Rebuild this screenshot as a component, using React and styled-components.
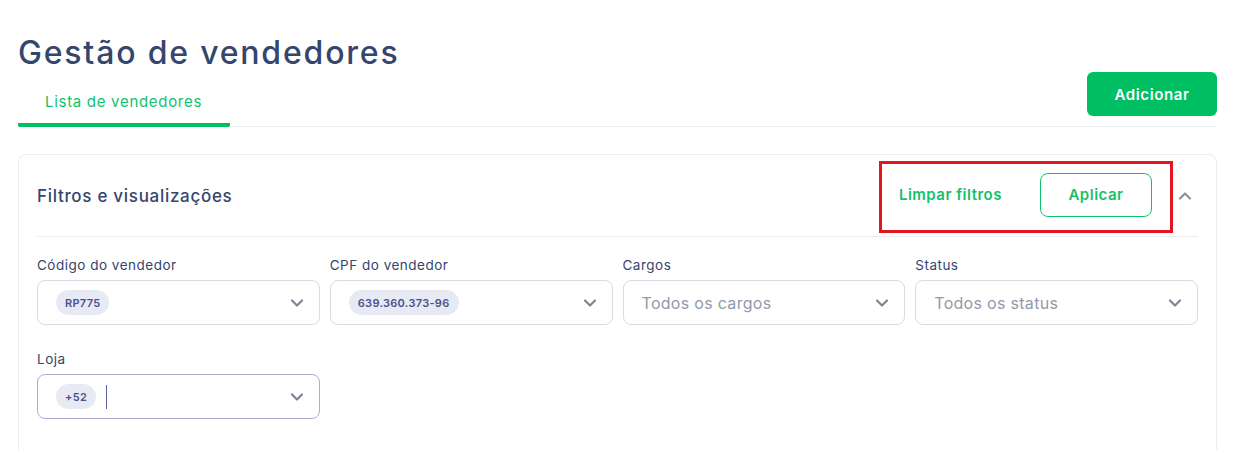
import React from 'react';
import styled, { createGlobalStyle } from 'styled-components';

const GlobalStyle = createGlobalStyle`
  body {
    margin: 0;
    background: #ffffff;
    font-family: 'Inter', 'Open Sans', sans-serif;
  }
`;

const Page = styled.div`
  padding: 30px 24px 0 18px;
  box-sizing: border-box;
  width: 1241px;
`;

const Title = styled.h1`
  margin: 0;
  font-size: 32px;
  font-weight: 500;
  color: #34466e;
  letter-spacing: 1.8px;
  line-height: 46px;
`;

const TabBar = styled.div`
  display: flex;
  justify-content: space-between;
  align-items: flex-end;
  border-bottom: 1px solid #ececf0;
  margin-top: -4px;
`;

const Tab = styled.div`
  width: 212px;
  padding: 0 0 12px 27px;
  box-sizing: border-box;
  color: #14c16b;
  font-size: 15px;
  letter-spacing: 0.7px;
  margin-bottom: -1px;
  border-bottom: 4px solid #00bf63;
  border-radius: 2px;
`;

const AddButton = styled.button`
  width: 130px;
  height: 44px;
  margin-bottom: 10px;
  border: none;
  border-radius: 6px;
  background: #00bf63;
  color: #ffffff;
  font-family: inherit;
  font-size: 15px;
  font-weight: 600;
  letter-spacing: 0.6px;
`;

const Card = styled.div`
  margin-top: 27px;
  border: 1px solid #ececf0;
  border-radius: 8px;
  padding: 0 18px;
  width: 1199px;
  box-sizing: border-box;
  height: 320px;
`;

const CardHeader = styled.div`
  display: flex;
  align-items: center;
  justify-content: space-between;
  height: 81px;
  border-bottom: 1px solid #ececf0;
`;

const CardTitle = styled.h2`
  margin: 0;
  font-size: 17px;
  font-weight: 500;
  color: #34466e;
  letter-spacing: 0.7px;
`;

const HeaderActions = styled.div`
  display: flex;
  align-items: center;
  gap: 2px;
  margin-right: 3px;
`;

const Highlight = styled.div`
  display: flex;
  align-items: center;
  gap: 38px;
  border: 3px solid #e3161f;
  padding: 8px 18px 13px 17px;
  height: 72px;
  box-sizing: border-box;
  margin-top: 3px;
`;

const LinkButton = styled.button`
  background: none;
  border: none;
  padding: 0;
  color: #14c16b;
  font-family: inherit;
  font-size: 15px;
  font-weight: 600;
  letter-spacing: 0.5px;
`;

const OutlineButton = styled.button`
  width: 112px;
  height: 44px;
  border: 1px solid #14c16b;
  border-radius: 8px;
  background: #ffffff;
  color: #14c16b;
  font-family: inherit;
  font-size: 15px;
  font-weight: 600;
  letter-spacing: 0.5px;
`;

const IconButton = styled.button`
  background: none;
  border: none;
  padding: 0;
  display: flex;
  color: #8a8fa0;
`;

const Grid = styled.div`
  display: grid;
  grid-template-columns: repeat(4, 1fr);
  column-gap: 10px;
  row-gap: 25px;
  padding-top: 19px;
`;

const Field = styled.div`
  display: flex;
  flex-direction: column;
  gap: 6px;
`;

const Label = styled.label`
  font-size: 13.5px;
  color: #34466e;
  line-height: 18px;
  letter-spacing: 0.5px;
`;

const Select = styled.div`
  display: flex;
  align-items: center;
  height: 45px;
  box-sizing: border-box;
  padding: 0 12px 0 18px;
  border: 1px solid ${(p) => (p.$focused ? '#a9acd3' : '#d9dbe5')};
  border-radius: 8px;
  gap: 10px;
`;

const Value = styled.div`
  flex: 1;
  display: flex;
  align-items: center;
  gap: 10px;
`;

const Chip = styled.span`
  display: inline-flex;
  align-items: center;
  height: 25px;
  padding: 0 9px;
  border-radius: 13px;
  background: #e8eaf3;
  color: #4b5090;
  font-size: 11px;
  font-weight: 600;
  letter-spacing: 0.3px;
`;

const Placeholder = styled.span`
  color: #9299ab;
  font-size: 16px;
  letter-spacing: 0.3px;
`;

const Caret = styled.span`
  width: 1px;
  height: 24px;
  background: #5a5fa0;
`;

const Chevron = ({ up }) => (
  <svg width="20" height="20" viewBox="0 0 24 24" fill="none" stroke="currentColor" strokeWidth="2.6" strokeLinecap="round" strokeLinejoin="round">
    <path d={up ? 'M6 15l6-6 6 6' : 'M6 9l6 6 6-6'} />
  </svg>
);

const ChevronWrap = styled.span`
  display: flex;
  color: #7f8393;
`;

const SelectBox = ({ chip, placeholder, focused }) => (
  <Select $focused={focused}>
    <Value>
      {chip && <Chip>{chip}</Chip>}
      {placeholder && <Placeholder>{placeholder}</Placeholder>}
      {focused && <Caret />}
    </Value>
    <ChevronWrap>
      <Chevron />
    </ChevronWrap>
  </Select>
);

const fields = [
  { label: 'Código do vendedor', chip: 'RP775' },
  { label: 'CPF do vendedor', chip: '639.360.373-96' },
  { label: 'Cargos', placeholder: 'Todos os cargos' },
  { label: 'Status', placeholder: 'Todos os status' },
  { label: 'Loja', chip: '+52', focused: true },
];

export default function App() {
  return (
    <>
      <GlobalStyle />
      <Page>
        <Title>Gestão de vendedores</Title>
        <TabBar>
          <Tab>Lista de vendedores</Tab>
          <AddButton>Adicionar</AddButton>
        </TabBar>
        <Card>
          <CardHeader>
            <CardTitle>Filtros e visualizações</CardTitle>
            <HeaderActions>
              <Highlight>
                <LinkButton>Limpar filtros</LinkButton>
                <OutlineButton>Aplicar</OutlineButton>
              </Highlight>
              <IconButton>
                <Chevron up />
              </IconButton>
            </HeaderActions>
          </CardHeader>
          <Grid>
            {fields.map((f) => (
              <Field key={f.label}>
                <Label>{f.label}</Label>
                <SelectBox chip={f.chip} placeholder={f.placeholder} focused={f.focused} />
              </Field>
            ))}
          </Grid>
        </Card>
      </Page>
    </>
  );
}
